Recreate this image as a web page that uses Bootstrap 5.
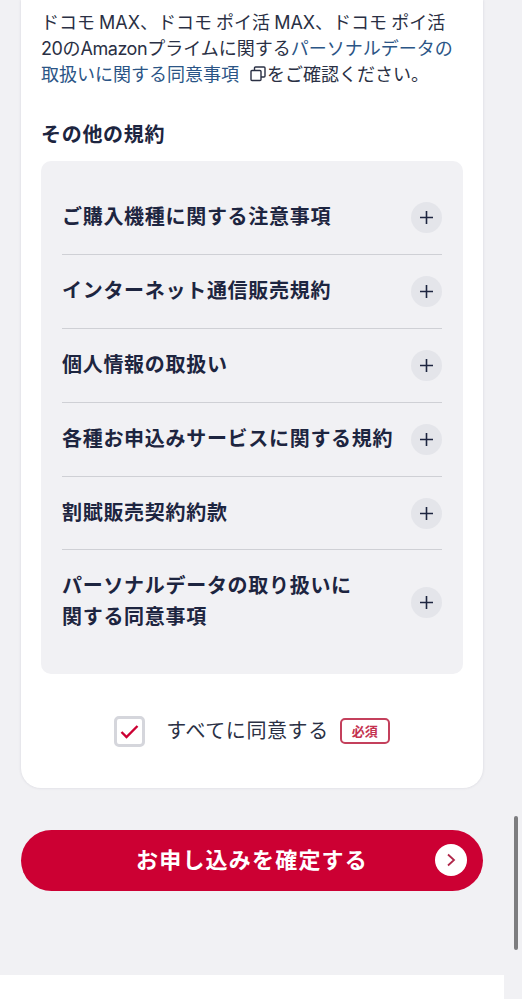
<!DOCTYPE html>
<html lang="ja">
<head>
<meta charset="utf-8">
<meta name="viewport" content="width=device-width, initial-scale=1">
<link rel="stylesheet" href="https://cdn.jsdelivr.net/npm/bootstrap@5.3.0/dist/css/bootstrap.min.css">
<style>
html,body{height:999px;overflow:hidden}
body{background:#f1f1f4;font-family:Inter,"Noto Sans CJK JP",sans-serif;color:#1d2540;position:relative}
.sheet{margin:0 39px 0 21px;background:#fff;border-radius:0 0 20px 20px;padding:10px 20px 0;height:788px;box-shadow:0 0 3px rgba(40,40,70,.13)}
.intro{font-size:18px;line-height:26px;color:#2a3044;margin:0;word-spacing:-1px;white-space:nowrap}
.intro-line{display:block}
.intro a{color:#2b5586;text-decoration:none}
.latin{letter-spacing:-.45px}
.ext{display:inline-block;vertical-align:-1px;margin:0 1px 0 11px}
.subhead{font-size:20px;line-height:30px;font-weight:700;letter-spacing:.7px;margin:32px 0 11px;color:#1d2540}
.terms{background:#f1f1f4;border-radius:10px;padding:20px 21px;height:513px}
.term{padding:21px 0;border-bottom:1px solid #cfd0d5}
.term:nth-child(5){padding-bottom:20px}
.term:last-child{border-bottom:0}
.term-name{font-size:20px;line-height:31px;font-weight:700;letter-spacing:.7px;color:#1d2540}
.plus{width:31px;height:31px;flex:none;border-radius:50%;background:#e4e5ea}
.agree{height:114px}
.tick{width:31px;height:31px;border:3px solid #d5d6dc;border-radius:5px;background:#fff}
.agree-text{font-size:20px;margin-left:21px;color:#2a3044;line-height:30px;letter-spacing:.6px}
.req{margin-left:11px;width:50px;height:26px;border:2px solid #c4405c;border-radius:5px;color:#c4324f;font-size:13px;font-weight:700;line-height:1}
.go{margin:42px 39px 0 21px;height:61px;width:462px;background:#cc0033;border-radius:31px;color:#fff;font-size:22px;font-weight:700;letter-spacing:1.2px;position:relative;border:0}
.go:hover,.go:active{background:#cc0033!important;color:#fff!important}
.go-ic{position:absolute;right:16px;top:14px;width:32px;height:32px;border-radius:50%;background:#fff}
.foot{margin-top:84px;width:504px;height:40px;background:#fff}
.sbar{position:absolute;left:514px;top:816px;width:4px;height:134px;border-radius:2px;background:#7d7d7f}
</style>
</head>
<body>
<div class="sheet">
  <p class="intro"><span class="intro-line">ドコモ MAX、ドコモ ポイ活 MAX、ドコモ ポイ活</span><span class="intro-line"><span class="latin">20</span>の<span class="latin">Amazon</span>プライムに関する<a href="#">パーソナルデータの</a></span><span class="intro-line"><a href="#">取扱いに関する同意事項</a><svg class="ext" width="16" height="16" viewBox="0 0 16 16" fill="none" stroke="#2a3044" stroke-width="1.4"><rect x="1" y="4.500" width="10" height="10" rx="1"/><path d="M4.500 4.500V2a1 1 0 0 1 1-1H14a1 1 0 0 1 1 1v8a1 1 0 0 1-1 1h-3"/></svg>をご確認ください。</span></p>
  <h2 class="subhead">その他の規約</h2>
  <div class="terms">
    <div class="term d-flex align-items-center justify-content-between"><span class="term-name">ご購入機種に関する注意事項</span><span class="plus d-flex align-items-center justify-content-center"><svg width="13" height="13" viewBox="0 0 13 13" stroke="#1d2540" stroke-width="1.6"><path d="M6.500 0v13M0 6.500h13"/></svg></span></div>
    <div class="term d-flex align-items-center justify-content-between"><span class="term-name">インターネット通信販売規約</span><span class="plus d-flex align-items-center justify-content-center"><svg width="13" height="13" viewBox="0 0 13 13" stroke="#1d2540" stroke-width="1.6"><path d="M6.500 0v13M0 6.500h13"/></svg></span></div>
    <div class="term d-flex align-items-center justify-content-between"><span class="term-name">個人情報の取扱い</span><span class="plus d-flex align-items-center justify-content-center"><svg width="13" height="13" viewBox="0 0 13 13" stroke="#1d2540" stroke-width="1.6"><path d="M6.500 0v13M0 6.500h13"/></svg></span></div>
    <div class="term d-flex align-items-center justify-content-between"><span class="term-name">各種お申込みサービスに関する規約</span><span class="plus d-flex align-items-center justify-content-center"><svg width="13" height="13" viewBox="0 0 13 13" stroke="#1d2540" stroke-width="1.6"><path d="M6.500 0v13M0 6.500h13"/></svg></span></div>
    <div class="term d-flex align-items-center justify-content-between"><span class="term-name">割賦販売契約約款</span><span class="plus d-flex align-items-center justify-content-center"><svg width="13" height="13" viewBox="0 0 13 13" stroke="#1d2540" stroke-width="1.6"><path d="M6.500 0v13M0 6.500h13"/></svg></span></div>
    <div class="term d-flex align-items-center justify-content-between"><span class="term-name">パーソナルデータの取り扱いに<br>関する同意事項</span><span class="plus d-flex align-items-center justify-content-center"><svg width="13" height="13" viewBox="0 0 13 13" stroke="#1d2540" stroke-width="1.6"><path d="M6.500 0v13M0 6.500h13"/></svg></span></div>
  </div>
  <div class="agree d-flex align-items-center justify-content-center">
    <span class="tick d-flex align-items-center justify-content-center"><svg width="19" height="15" viewBox="0 0 19 15" fill="none" stroke="#cc0033" stroke-width="2.4"><path d="M1.500 8l5 5L17.500 2"/></svg></span>
    <span class="agree-text">すべてに同意する</span>
    <span class="req d-flex align-items-center justify-content-center">必須</span>
  </div>
</div>
<button type="button" class="btn go d-flex align-items-center justify-content-center"><span>お申し込みを確定する</span><span class="go-ic d-flex align-items-center justify-content-center"><svg width="10" height="14" viewBox="0 0 10 14" fill="none" stroke="#b0274a" stroke-width="1.8"><path d="M2 1.500L8 7l-6 5.500"/></svg></span></button>
<div class="foot"></div>
<div class="sbar"></div>
<script src="https://cdn.jsdelivr.net/npm/bootstrap@5.3.0/dist/js/bootstrap.bundle.min.js"></script>
</body>
</html>
